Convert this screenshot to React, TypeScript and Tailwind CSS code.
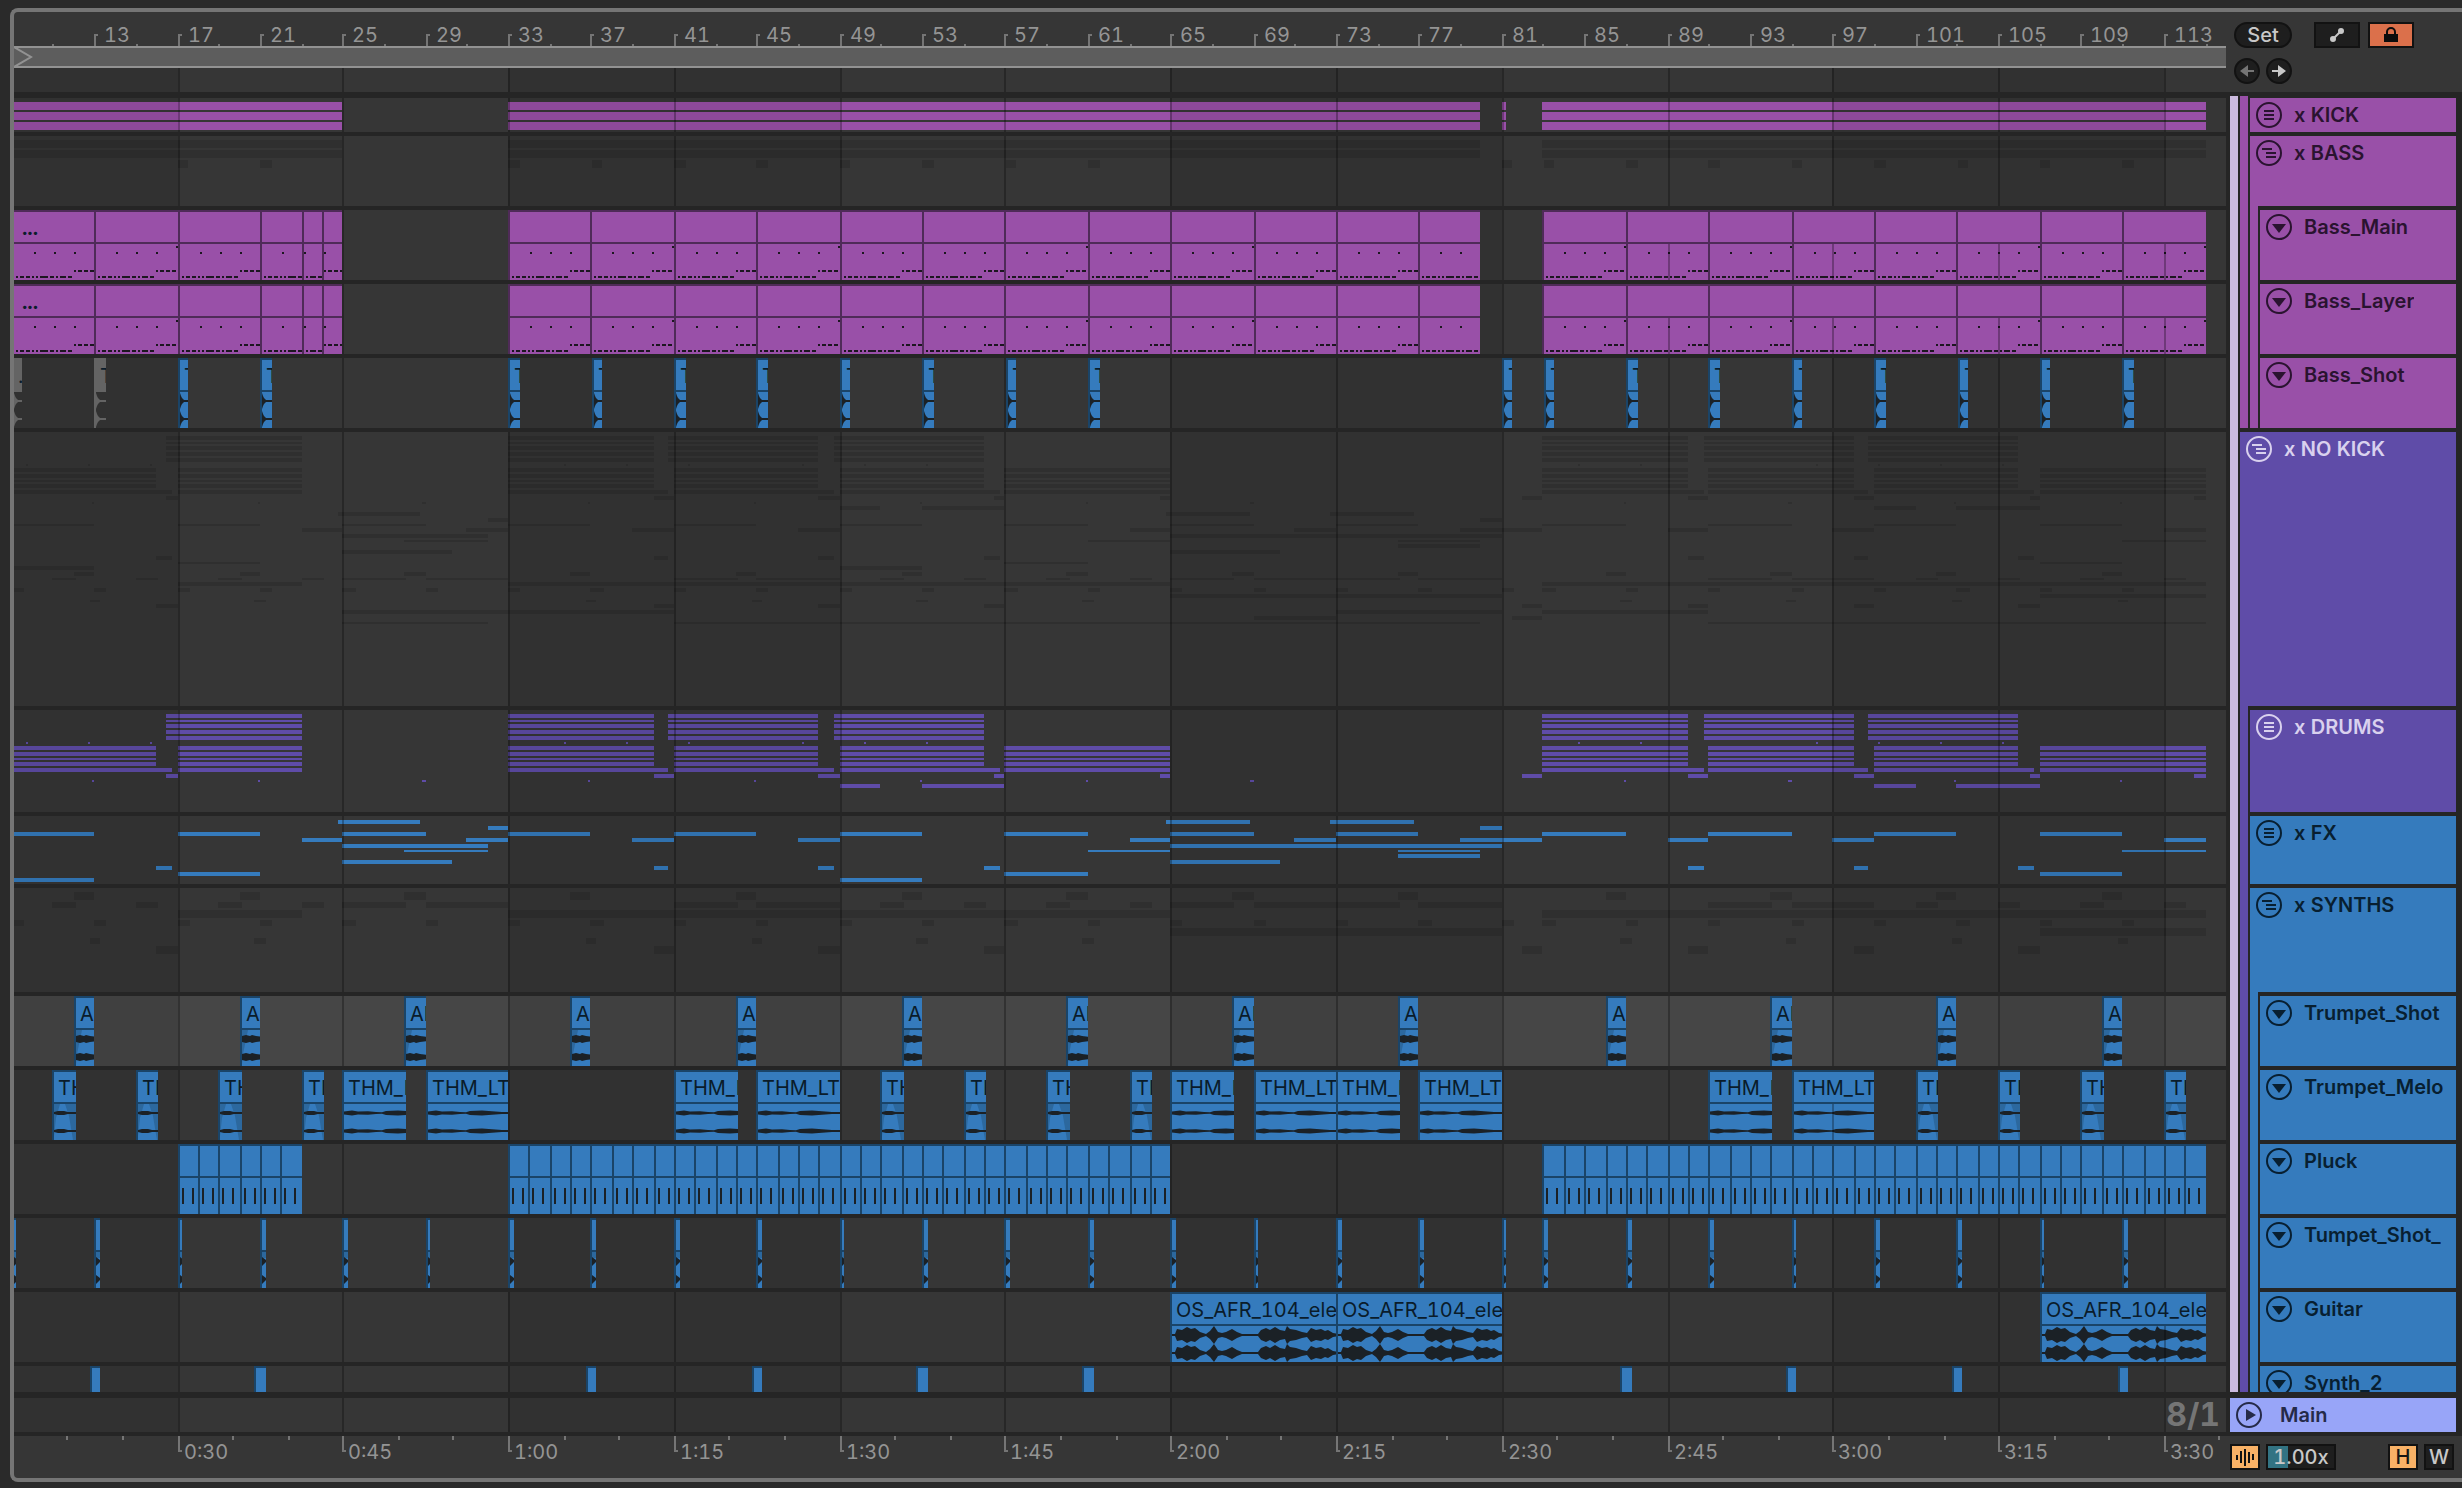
import React from 'react';
import clsx from 'clsx';

type Span = [start: number, end: number];
type Tone = 'plum' | 'violet' | 'blue' | 'ghost' | 'muted';

interface Row {
  y: number;
  h: number;
  spans: Span[];
}

// zoom level of the arrangement
const BAR_WIDTH = 20.695;
const BAR_17_X = 164.05;

// bar position -> px inside the lane, snapped to the 2px grid
const at = (bar: number) => Math.floor((BAR_17_X + (bar - 17) * BAR_WIDTH) / 2) * 2;

const range = (from: number, to: number, step: number) => {
  const list: number[] = [];
  for (let n = from; n <= to; n += step) list.push(n);
  return list;
};

const every = (starts: number[], length: number): Span[] => starts.map((s) => [s, s + length]);

const GRID = range(17, 113, 8);
const BANDS: Span[] = every([1, 33, 65, 97], 16);

const BASS_SPANS: Span[] = [
  [9, 25],
  [33, 80],
  [83, 115],
];
// the shots sit a touch behind the downbeat
const BASS_SHOTS = [17, 21, ...range(33, 61, 4), 81, ...range(83, 111, 4)].map((n) => n + 0.02);
const TRUMPET_SHOTS = [...range(12, 76, 8), ...range(86, 110, 8)];
const TUMPET_SHOTS = [...range(9, 81, 4), ...range(83, 111, 4)];
const SYNTH_2 = [12, 20, 36, 44, 52, 60, 86, 94, 102, 110].map((n) => n + 0.75);
const MELO_SHORT = [11, 15, 19, 23, 51, 55, 59, 63, 101, 105, 109, 113];
const MELO_LONG: Span[] = [
  [25, 28.1],
  [29, 33],
  [41, 44.1],
  [45, 49],
  [65, 68.1],
  [69, 73],
  [73, 76.1],
  [77, 81],
  [91, 94.1],
  [95, 99],
];
const PLUCK_SPANS: Span[] = [
  [17, 23],
  [33, 65],
  [83, 115],
];
const GUITAR: Span[] = [
  [65, 73],
  [73, 81],
  [107, 115],
];
const FILLS: Span[] = every([16, 40, 48, 56, 82, 90, 98, 106], 1);

const CYMBALS: Span[] = [
  [16.45, 23],
  [33, 40],
  [40.7, 48],
  [48.7, 56],
  [83, 90],
  [90.75, 98],
  [98.7, 106],
];
const GROOVE: Span[] = [
  [9, 16],
  [17, 23],
  [33, 40],
  [41, 48],
  [49, 56],
  [57, 65],
  [83, 90],
  [91, 98],
  [99, 106],
  [107, 115],
];
const HATS: Span[] = [
  [9, 16.75],
  [17, 23],
  [33, 40.7],
  [41, 48.7],
  [49, 56.75],
  [57, 65],
  [83, 90.75],
  [91, 98.7],
  [99, 106.75],
  [107, 115],
];

const DRUM_ROWS: Row[] = [
  { y: 4, h: 4, spans: CYMBALS },
  { y: 10, h: 2, spans: CYMBALS },
  { y: 14, h: 4, spans: CYMBALS },
  { y: 20, h: 4, spans: CYMBALS },
  { y: 26, h: 4, spans: CYMBALS },
  {
    y: 32,
    h: 2,
    spans: every(
      [
        9.67, 12.67, 15.67, 35.67, 38.67, 41.67, 47.17, 50.17, 53.17, 84.67, 87.67, 96.17, 99.17,
        102.17, 105.17,
      ],
      0.1,
    ),
  },
  { y: 36, h: 4, spans: GROOVE },
  { y: 42, h: 4, spans: GROOVE },
  { y: 48, h: 2, spans: GROOVE },
  { y: 52, h: 4, spans: GROOVE },
  { y: 58, h: 4, spans: HATS },
  {
    y: 64,
    h: 4,
    spans: [
      [16.45, 17],
      [40, 41],
      [48, 49],
      [56.5, 57],
      [64.5, 65],
      [82, 83],
      [90, 91],
      [98, 99],
      [106.5, 107],
      [114.5, 115],
    ],
  },
  { y: 70, h: 2, spans: every([...range(12.88, 68.88, 8), ...range(86.88, 110.88, 8)], 0.12) },
  {
    y: 74,
    h: 4,
    spans: [
      [49, 51],
      [53, 57],
      [99, 101],
      [103, 107],
    ],
  },
];

const FX_SPANS: Span[][] = [
  [
    [24.75, 28.75],
    [64.8, 68.8],
    [72.75, 76.75],
  ],
  [
    [32, 33],
    [80, 81],
  ],
  every([9, 17, 25, 33, 41, 49, 57, 65, 73, 83, 91, 99, 107], 4),
  [...every([23, 31, 39, 47, 63, 71, 89, 97, 113], 2), [79, 83]],
  [
    [25, 32],
    [65, 81],
  ],
  every([28, 61, 76, 111], 4),
  [[76, 80]],
  every([25, 65], 5.25),
  every([16, 40, 48, 56, 90, 98, 106], 0.75),
  every([17, 57, 107], 4),
  every([9, 49], 4),
];

const SYNTH_SPANS: Span[][] = [
  every(TRUMPET_SHOTS, 1),
  [...every(MELO_SHORT, 1.1), ...MELO_LONG],
  PLUCK_SPANS,
  every(TUMPET_SHOTS, 0.6),
  GUITAR,
  every(SYNTH_2, 0.52),
  FILLS,
];

const toRows = (spans: Span[][], layout: [y: number, h: number][]): Row[] =>
  spans.map((list, i) => ({ y: layout[i][0], h: layout[i][1], spans: list }));

const FX_ROWS = toRows(FX_SPANS, [
  [4, 4],
  [10, 4],
  [16, 4],
  [22, 4],
  [28, 4],
  [34, 2],
  [38, 4],
  [44, 4],
  [50, 4],
  [56, 4],
  [62, 4],
]);

const SYNTH_ROWS = toRows(SYNTH_SPANS, [
  [4, 8],
  [14, 6],
  [22, 8],
  [32, 6],
  [40, 8],
  [50, 6],
  [58, 8],
]);

const KICK_SPANS: Span[] = [
  [9, 25],
  [33, 80],
  [81, 81.25],
  [83, 115],
];
const KICK_ROWS: Row[] = [4, 14, 24].map((y) => ({ y, h: 8, spans: KICK_SPANS }));

const BASS_ROWS: Row[] = [
  { y: 4, h: 8, spans: BASS_SPANS },
  { y: 14, h: 8, spans: BASS_SPANS },
  { y: 24, h: 8, spans: every(BASS_SHOTS, 0.53) },
];

const NO_KICK_ROWS: Row[] = [
  ...DRUM_ROWS,
  ...toRows(FX_SPANS, [
    [80, 4],
    [86, 4],
    [92, 2],
    [96, 4],
    [102, 4],
    [108, 2],
    [112, 4],
    [118, 4],
    [124, 4],
    [130, 2],
    [134, 4],
  ]),
  ...toRows(SYNTH_SPANS, [
    [140, 4],
    [146, 2],
    [150, 4],
    [156, 4],
    [162, 4],
    [168, 2],
    [172, 4],
  ]),
  {
    y: 178,
    h: 4,
    spans: [
      [25, 41],
      [73, 81],
      [83, 91],
    ],
  },
  {
    y: 184,
    h: 4,
    spans: [
      [69, 73],
      [81.5, 83],
    ],
  },
  {
    y: 190,
    h: 2,
    spans: [
      [25, 32],
      [41, 80],
      [91, 115],
    ],
  },
];

const FILL: Record<Tone, string> = {
  plum: 'bg-[#9950a8]',
  violet: 'bg-[#5f4ca8]',
  blue: 'bg-[#357bbd]',
  ghost: 'bg-black/12',
  muted: 'bg-[#646464]',
};

const CLIP_EDGE: Record<Tone, string> = {
  plum: 'border-[#4f2b58]',
  violet: 'border-[#30265a]',
  blue: 'border-[#1a4468]',
  ghost: 'border-transparent',
  muted: 'border-[#646464]',
};

const Grid = () => (
  <>
    {BANDS.map(([start, end]) => (
      <div
        className="absolute inset-y-0 bg-black/8"
        key={`band-${start}`}
        style={{ left: at(start), width: at(end) - at(start) }}
      />
    ))}
    {GRID.map((bar) => (
      <div className="absolute inset-y-0 w-0.5 bg-black/28" key={bar} style={{ left: at(bar) }} />
    ))}
  </>
);

interface LaneProps {
  height: string;
  selected?: boolean;
  children?: React.ReactNode;
}

const Lane = ({ height, selected, children }: LaneProps) => (
  <div
    className={clsx(
      'relative shrink-0 overflow-hidden',
      height,
      selected ? 'bg-[#464646]' : 'bg-[#363636]',
    )}
  >
    {children}
  </div>
);

// folded overview of a group: one thin stripe per child row, grid drawn above
const OverviewLane = ({ height, tone, rows }: { height: string; tone: Tone; rows: Row[] }) => (
  <Lane height={height}>
    {rows.map(({ y, h, spans }) =>
      spans.map(([start, end]) => (
        <div
          className={clsx('absolute', FILL[tone])}
          key={`${y}-${start}`}
          style={{ top: y, height: h, left: at(start), width: Math.max(2, at(end) - at(start)) }}
        />
      )),
    )}
    <Grid />
  </Lane>
);

interface ClipProps {
  span: Span;
  tone: Tone;
  title?: React.ReactNode;
  children?: React.ReactNode;
}

const Clip = ({ span: [start, end], tone, title, children }: ClipProps) => (
  <div
    className={clsx(
      'absolute inset-y-0 flex flex-col overflow-hidden border-t-2 border-l-2',
      CLIP_EDGE[tone],
      tone !== 'muted' && FILL[tone],
    )}
    style={{ left: at(start), width: at(end) - at(start) }}
  >
    <div
      className={clsx(
        'h-8 shrink-0 overflow-hidden border-b-2 pl-1 text-xl/8 whitespace-nowrap text-[#0a1c2b]',
        CLIP_EDGE[tone],
        FILL[tone],
      )}
    >
      {title}
    </div>
    <div className="relative h-9 shrink-0 overflow-hidden">
      {children}
      {GRID.filter((bar) => bar > start && bar < end).map((bar) => (
        <div
          className="absolute inset-y-0 w-0.5 bg-black/28"
          key={bar}
          style={{ left: at(bar) - at(start) - 2 }}
        />
      ))}
    </div>
  </div>
);

const ClipLane = ({ selected, children }: { selected?: boolean; children: React.ReactNode }) => (
  <Lane height="h-[70px]" selected={selected}>
    <Grid />
    {children}
  </Lane>
);

// [x, y, width] of every note in the four bar bass phrase
const BASS_NOTES: [number, number, number][] = [
  [20, 8, 2],
  [40, 8, 2],
  [60, 8, 2],
  [80, 2, 2],
  [60, 26, 2],
  [64, 26, 4],
  [70, 26, 4],
  [76, 26, 4],
  [2, 32, 2],
  [6, 32, 4],
  [12, 32, 4],
  [18, 32, 2],
  [22, 32, 2],
  [26, 32, 8],
  [36, 32, 4],
  [42, 32, 2],
  [46, 32, 6],
  [54, 32, 4],
];

const BassNotes = ({ skip = 0 }: { skip?: number }) => (
  <svg className="block h-9 w-21" viewBox={`${skip * 20} 0 84 36`} fill="#1c1620">
    {BASS_NOTES.map(([x, y, w]) => (
      <rect key={`${x}-${y}`} x={x} y={y} width={w} height="2" shapeRendering="crispEdges" />
    ))}
  </svg>
);

const BASS_CLIPS: { span: Span; skip?: number; title?: React.ReactNode }[] = [
  { span: [9, 13], title: <b className="pl-1">...</b> },
  { span: [13, 17] },
  { span: [17, 21] },
  { span: [21, 23] },
  { span: [23, 24], skip: 2 },
  { span: [24, 25], skip: 3 },
  ...every(range(33, 73, 4), 4).map((span) => ({ span })),
  { span: [77, 80] },
  ...every(range(83, 111, 4), 4).map((span) => ({ span })),
];

const BassLane = () => (
  <ClipLane>
    {BASS_CLIPS.map(({ span, skip, title }) => (
      <Clip span={span} tone="plum" title={title} key={span[0]}>
        <BassNotes skip={skip} />
      </Clip>
    ))}
  </ClipLane>
);

// stereo wave form: the same envelope mirrored round both channel axes
const Wave = ({ points, className }: { points: [number, number][]; className: string }) => {
  const outline = (axis: number) =>
    [
      ...points.map(([x, amp]) => `${x},${axis - amp}`),
      ...[...points].reverse().map(([x, amp]) => `${x},${axis + amp}`),
    ].join(' ');
  return (
    <svg className={clsx('absolute top-0 left-0 h-9', className)}>
      <polygon points={outline(9)} />
      <polygon points={outline(27)} />
    </svg>
  );
};

const SHOT_WAVE: [number, number][] = [
  [0, 8],
  [1, 5],
  [2, 3],
  [4, 1],
  [14, 1],
];
const TRUMPET_WAVE: [number, number][] = [
  [0, 3],
  [4, 4],
  [8, 3],
  [10, 4],
  [14, 3],
  [22, 2],
];
const SHORT_MELO_WAVE: [number, number][] = [
  [0, 1],
  [4, 2],
  [10, 2],
  [14, 1],
  [24, 1],
];
const MELO_WAVE: [number, number][] = [
  [0, 1.6],
  [8, 2.4],
  [14, 1.6],
  [24, 1.8],
  [32, 1],
  [38, 0.8],
  [42, 2],
  [54, 2.4],
  [64, 1.8],
  [74, 1],
  [84, 1],
];
const GUITAR_WAVE: [number, number][] = [
  [0, 1],
  [3, 1],
  [5, 6],
  [10, 5],
  [15, 8],
  [19, 6],
  [23, 7],
  [28, 3],
  [34, 1],
  [38, 4],
  [42, 9],
  [46, 3],
  [50, 2],
  [54, 3],
  [60, 6],
  [65, 3],
  [70, 1],
  [86, 1],
  [89, 5],
  [94, 7],
  [98, 5],
  [103, 8],
  [108, 5],
  [113, 4],
  [115, 9],
  [118, 6],
  [124, 5],
  [130, 3],
  [135, 2],
  [139, 7],
  [144, 5],
  [149, 6],
  [153, 4],
  [156, 5],
  [161, 2],
  [166, 1],
];

const DARK_WAVE = 'w-45 fill-[#1b2126]';

const BassShotLane = () => (
  <ClipLane>
    <Clip span={[9, 9.55]} tone="muted" title="...">
      <Wave points={SHOT_WAVE} className="w-4 fill-[#646464]" />
    </Clip>
    <Clip span={[13, 13.55]} tone="muted" title="TH">
      <Wave points={SHOT_WAVE} className="w-4 fill-[#646464]" />
    </Clip>
    {every(BASS_SHOTS, 0.53).map((span) => (
      <Clip span={span} tone="blue" title="TH" key={span[0]}>
        <Wave points={SHOT_WAVE} className={DARK_WAVE} />
      </Clip>
    ))}
  </ClipLane>
);

const TrumpetShotLane = () => (
  <ClipLane selected>
    {every(TRUMPET_SHOTS, 1).map((span) => (
      <Clip span={span} tone="blue" title="AR" key={span[0]}>
        <svg className="absolute top-0 left-0 h-9 w-5 fill-[#2c689e]">
          <polygon points="0,0 6,0 1,24 0,34" />
        </svg>
        <Wave points={TRUMPET_WAVE} className={DARK_WAVE} />
      </Clip>
    ))}
  </ClipLane>
);

const TrumpetMeloLane = () => (
  <ClipLane>
    {every(MELO_SHORT, 1.1).map((span) => (
      <Clip span={span} tone="blue" title="THM" key={span[0]}>
        <svg className="absolute top-0 left-0 h-9 w-6 fill-[#2c689e]">
          <polygon points="0,0 6,0 2,14 0,32" />
          <polygon points="11,0 24,0 24,36 19,36 15,12" />
        </svg>
        <Wave points={SHORT_MELO_WAVE} className={DARK_WAVE} />
      </Clip>
    ))}
    {MELO_LONG.map((span) => (
      <Clip span={span} tone="blue" title="THM_LT" key={span[0]}>
        <Wave points={MELO_WAVE} className={DARK_WAVE} />
      </Clip>
    ))}
  </ClipLane>
);

const PluckLane = () => (
  <ClipLane>
    {PLUCK_SPANS.flatMap(([start, end]) => range(start, end - 1, 1)).map((bar) => (
      <Clip span={[bar, bar + 1]} tone="blue" key={bar}>
        <div className="flex gap-2 pt-2.5 pl-0.5">
          <div className="h-4 w-0.5 bg-[#1b2126]" />
          <div className="h-4 w-0.5 bg-[#1b2126]" />
        </div>
      </Clip>
    ))}
  </ClipLane>
);

const TumpetShotLane = () => (
  <ClipLane>
    {every(TUMPET_SHOTS, 0.26).map((span) => (
      <Clip span={span} tone="blue" key={span[0]}>
        <svg className="absolute top-0 left-0 h-9 w-2">
          <rect width="8" height="6" fill="#2c689e" />
          <path d="M0,5L4,8V10L0,14ZM0,23L4,26V28L0,32Z" fill="#1b2126" />
        </svg>
      </Clip>
    ))}
  </ClipLane>
);

const GuitarLane = () => (
  <ClipLane>
    {GUITAR.map((span) => (
      <Clip span={span} tone="blue" title="OS_AFR_104_ele" key={span[0]}>
        <Wave points={GUITAR_WAVE} className={DARK_WAVE} />
      </Clip>
    ))}
  </ClipLane>
);

const SynthTwoLane = () => (
  <ClipLane>
    {every(SYNTH_2, 0.52).map((span) => (
      <Clip span={span} tone="blue" key={span[0]} />
    ))}
  </ClipLane>
);

type IconKind = 'lines' | 'group' | 'fold' | 'play';

const ICON_PATH: Record<IconKind, React.ReactNode> = {
  lines: <path d="M8 9H18M8 13H18M8 17H18" />,
  group: <path d="M6 9H16M10 13H20M10 17H20" />,
  fold: <path d="M6 10H20L13 19Z" fill="currentColor" stroke="none" />,
  play: <path d="M10 7V19L20 13Z" fill="currentColor" stroke="none" />,
};

const ICON_LABEL: Record<IconKind, string> = {
  lines: 'Unfold track',
  group: 'Fold group',
  fold: 'Fold track',
  play: 'Unfold main track',
};

const RoundIcon = ({ kind }: { kind: IconKind }) => (
  <button className="shrink-0" type="button" aria-label={ICON_LABEL[kind]}>
    <svg className="block size-[26px]" fill="none" stroke="currentColor" strokeWidth="2">
      <circle cx="13" cy="13" r="12" />
      {ICON_PATH[kind]}
    </svg>
  </button>
);

interface HeaderProps {
  name: string;
  icon: IconKind;
  height: string;
  color: string;
}

const Header = ({ name, icon, height, color }: HeaderProps) => (
  <div className={clsx('flex shrink-0 items-start gap-3 overflow-hidden px-1.5 pt-1', height, color)}>
    <RoundIcon kind={icon} />
    <span className="overflow-hidden text-xl/[26px] font-semibold whitespace-nowrap">{name}</span>
  </div>
);

const PLUM = 'bg-[#9950a8] text-[#2a1330]';
const VIOLET = 'bg-[#5f4ca8] text-[#d9d1ee]';
const BLUE = 'bg-[#357bbd] text-[#081f31]';

interface GroupProps extends HeaderProps {
  children: React.ReactNode;
}

const Group = ({ children, ...header }: GroupProps) => (
  <div className={header.color}>
    <Header {...header} />
    <div className="ml-2 flex flex-col gap-1 bg-[#252525] pt-1 pl-0.5">{children}</div>
  </div>
);

const Track = ({ name, color }: { name: string; color: string }) => (
  <Header name={name} icon="fold" height="h-[70px]" color={color} />
);

const TrackHeaders = () => (
  <div className="flex gap-0.5">
    <div className="w-2 shrink-0 bg-[#cbbadf]" />
    <div className="flex min-w-0 flex-1 flex-col gap-1">
      <div className="flex gap-0.5">
        <div className="w-2 shrink-0 bg-[#9950a8]" />
        <div className="flex min-w-0 flex-1 flex-col gap-1 pt-0.5">
          <Header name="x KICK" icon="lines" height="h-[34px]" color={PLUM} />
          <Group name="x BASS" icon="group" height="h-[70px]" color={PLUM}>
            <Track name="Bass_Main" color={PLUM} />
            <Track name="Bass_Layer" color={PLUM} />
            <Track name="Bass_Shot" color={PLUM} />
          </Group>
        </div>
      </div>
      <Group name="x NO KICK" icon="group" height="h-[274px]" color={VIOLET}>
        <Header name="x DRUMS" icon="lines" height="h-[102px]" color={VIOLET} />
        <Header name="x FX" icon="lines" height="h-[68px]" color={BLUE} />
        <Group name="x SYNTHS" icon="group" height="h-[104px]" color={BLUE}>
          <Track name="Trumpet_Shot" color={BLUE} />
          <Track name="Trumpet_Melo" color={BLUE} />
          <Track name="Pluck" color={BLUE} />
          <Track name="Tumpet_Shot_" color={BLUE} />
          <Track name="Guitar" color={BLUE} />
          <Track name="Synth_2" color={BLUE} />
        </Group>
      </Group>
    </div>
  </div>
);

const BarRuler = () => (
  <div className="relative h-[34px] overflow-hidden text-[#949494]">
    {range(13, 113, 4).map((bar) => (
      <div
        className="absolute bottom-0 flex items-end gap-1.5"
        key={bar}
        style={{ left: at(bar) }}
      >
        <div className="h-3 w-1 border-t-2 border-l-2 border-[#757575]" />
        <span className="text-xl/[22px]">{bar}</span>
      </div>
    ))}
    {range(11, 115, 4).map((bar) => (
      <div className="absolute bottom-0 h-0.5 w-0.5 bg-[#757575]" key={bar} style={{ left: at(bar) }} />
    ))}
  </div>
);

const formatTime = (seconds: number) =>
  `${Math.floor(seconds / 60)}:${String(seconds % 60).padStart(2, '0')}`;

const toBar = (seconds: number) => 1 + seconds / 1.875;

const TimeRuler = () => (
  <div className="relative h-full overflow-hidden text-[#949494]">
    {range(30, 210, 15).map((seconds) => (
      <div className="absolute top-0 flex gap-0.5" key={seconds} style={{ left: at(toBar(seconds)) }}>
        <div className="h-4 w-1 border-b-2 border-l-2 border-[#757575]" />
        <span className="pt-1 text-xl/6">{formatTime(seconds)}</span>
      </div>
    ))}
    {range(20, 215, 5)
      .filter((seconds) => seconds % 15 !== 0)
      .map((seconds) => (
        <div
          className="absolute top-0 h-1 w-0.5 bg-[#757575]"
          key={seconds}
          style={{ left: at(toBar(seconds)) }}
        />
      ))}
  </div>
);

const LoopBar = () => (
  <div className="h-[22px] border-y-2 border-[#929292] bg-[#5d5d5d]">
    <svg className="block h-[18px] w-5" fill="none" stroke="#929292" strokeWidth="2">
      <path d="M0 -1L17 9L0 19" />
    </svg>
  </div>
);

const TopControls = () => (
  <div className="flex flex-col gap-2.5 pt-2.5 pl-2 text-[#c8c8c8]">
    <div className="flex items-center">
      <button
        className="h-[26px] w-[58px] rounded-full border-2 border-[#121212] bg-[#1e1e1e] text-xl/[22px] font-medium"
        type="button"
      >
        Set
      </button>
      <button
        className="ml-[22px] flex h-[26px] w-[46px] items-center justify-center border-2 border-[#121212] bg-[#1e1e1e]"
        type="button"
        aria-label="Automation mode"
      >
        <svg className="size-4" fill="currentColor" stroke="currentColor" strokeWidth="2">
          <path d="M4 12L12 4" />
          <circle cx="4" cy="12" r="2" />
          <circle cx="12" cy="4" r="2" />
        </svg>
      </button>
      <button
        className="ml-2 flex h-[26px] w-[46px] items-center justify-center border-2 border-[#121212] bg-[#db704b]"
        type="button"
        aria-label="Lock envelopes"
      >
        <svg className="h-4 w-3.5" fill="none" stroke="#0c0c0c" strokeWidth="2">
          <path d="M3 8V5A4 4 0 0 1 11 5V8" />
          <rect x="0" y="7" width="14" height="8" fill="#0c0c0c" stroke="none" />
        </svg>
      </button>
    </div>
    <div className="flex gap-1.5">
      <button
        className="size-[26px] rounded-full border-2 border-[#121212] bg-[#1e1e1e] text-[#757575]"
        type="button"
        aria-label="Previous locator"
      >
        <svg className="block size-[22px]" fill="currentColor">
          <path d="M4 11L12 5V10H18V12H12V17Z" />
        </svg>
      </button>
      <button
        className="size-[26px] rounded-full border-2 border-[#121212] bg-[#1e1e1e]"
        type="button"
        aria-label="Next locator"
      >
        <svg className="block size-[22px]" fill="currentColor">
          <path d="M18 11L10 5V10H4V12H10V17Z" />
        </svg>
      </button>
    </div>
  </div>
);

const BottomControls = () => (
  <div className="flex pt-2 pr-2 pl-1 text-xl/[22px] font-medium text-[#c8c8c8]">
    <button
      className="h-[26px] w-[30px] border-2 border-[#121212] bg-[#f8b166]"
      type="button"
      aria-label="Waveform zoom"
    >
      <svg className="block h-[22px] w-[26px]" stroke="#111" strokeWidth="2">
        <path d="M5 9V14M9 5V17M13 3V20M17 6V17M21 8V14" />
      </svg>
    </button>
    <input
      className="ml-1.5 h-[26px] w-[70px] border-2 border-[#121212] bg-[linear-gradient(to_right,#327383_20px,#1e1e1e_20px)] text-center"
      aria-label="Zoom factor"
      defaultValue="1.00x"
    />
    <button
      className="ml-auto h-[26px] w-[30px] border-2 border-[#121212] bg-[#f8b166] text-[#161616]"
      type="button"
    >
      H
    </button>
    <button
      className="ml-1.5 h-[26px] w-[30px] border-2 border-[#121212] bg-[#1e1e1e]"
      type="button"
    >
      W
    </button>
  </div>
);

const App = () => (
  <div className="flex h-screen flex-col bg-[#2a2a2a] pt-2 pb-1.5 pl-2.5 font-['Inter','Liberation_Sans',sans-serif] tabular-nums">
    <main className="flex min-h-0 flex-1 flex-col overflow-hidden rounded-l-lg border-4 border-r-0 border-[#757575] bg-[#363636]">
      <div className="flex h-20 shrink-0">
        <div className="min-w-0 flex-1">
          <BarRuler />
          <LoopBar />
          <Lane height="h-6">
            <Grid />
          </Lane>
        </div>
        <div className="w-[236px] shrink-0">
          <TopControls />
        </div>
      </div>

      <div className="flex min-h-0 flex-1 overflow-hidden border-t-4 border-b-6 border-[#252525] bg-[#252525]">
        <div className="flex min-w-0 flex-1 flex-col gap-1 pt-0.5">
          <OverviewLane height="h-[34px]" tone="plum" rows={KICK_ROWS} />
          <OverviewLane height="h-[70px]" tone="ghost" rows={BASS_ROWS} />
          <BassLane />
          <BassLane />
          <BassShotLane />
          <OverviewLane height="h-[274px]" tone="ghost" rows={NO_KICK_ROWS} />
          <OverviewLane height="h-[102px]" tone="violet" rows={DRUM_ROWS} />
          <OverviewLane height="h-[68px]" tone="blue" rows={FX_ROWS} />
          <OverviewLane height="h-[104px]" tone="ghost" rows={SYNTH_ROWS} />
          <TrumpetShotLane />
          <TrumpetMeloLane />
          <PluckLane />
          <TumpetShotLane />
          <GuitarLane />
          <SynthTwoLane />
        </div>
        <div className="w-[236px] shrink-0 pr-1.5 pl-1">
          <TrackHeaders />
        </div>
      </div>

      <div className="flex h-[38px] shrink-0 border-b-4 border-[#252525] bg-[#252525]">
        <div className="relative min-w-0 flex-1">
          <Lane height="h-[34px]">
            <Grid />
          </Lane>
          <span className="absolute right-1.5 bottom-0 text-[32px]/[34px] font-bold text-[#757575]">
            8/1
          </span>
        </div>
        <div className="w-[236px] shrink-0 pr-1.5 pl-1">
          <div className="flex h-[34px] items-center gap-4.5 bg-[#98a5f8] px-1.5 text-[#252a48]">
            <RoundIcon kind="play" />
            <span className="text-xl font-semibold">Main</span>
          </div>
        </div>
      </div>

      <div className="flex h-[42px] shrink-0">
        <div className="min-w-0 flex-1">
          <TimeRuler />
        </div>
        <div className="w-[236px] shrink-0">
          <BottomControls />
        </div>
      </div>
    </main>
  </div>
);

export default App;
